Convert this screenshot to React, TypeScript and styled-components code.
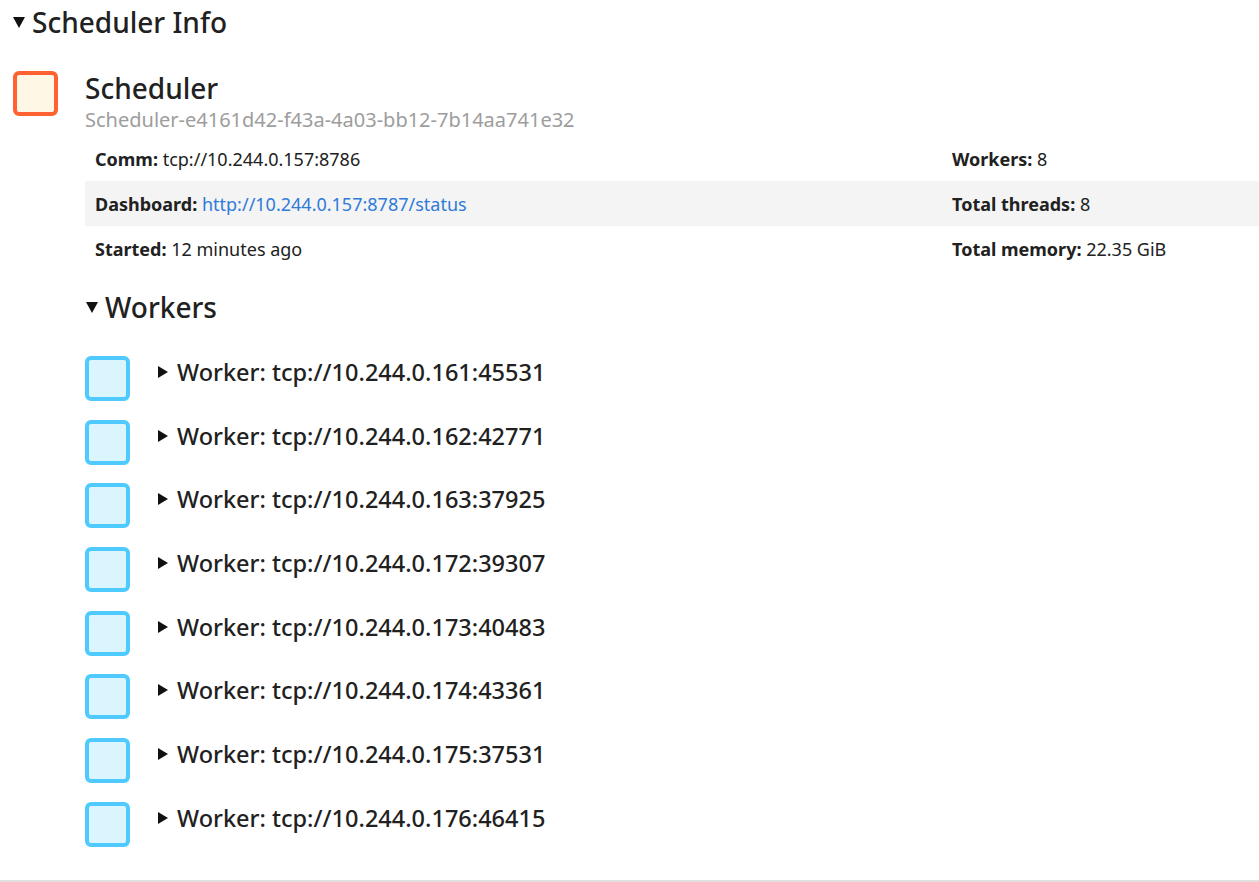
import React from "react";
import styled, { createGlobalStyle } from "styled-components";

const workers = [
  "tcp://10.244.0.161:45531",
  "tcp://10.244.0.162:42771",
  "tcp://10.244.0.163:37925",
  "tcp://10.244.0.172:39307",
  "tcp://10.244.0.173:40483",
  "tcp://10.244.0.174:43361",
  "tcp://10.244.0.175:37531",
  "tcp://10.244.0.176:46415",
];

export default function App() {
  return (
    <Page>
      <GlobalStyle />
      <SectionTitle>
        <Caret $open $size={13} />
        Scheduler Info
      </SectionTitle>

      <SchedulerBlock>
        <Badge $kind="scheduler" />
        <SchedulerBody>
          <Name>Scheduler</Name>
          <Id>Scheduler-e4161d42-f43a-4a03-bb12-7b14aa741e32</Id>
          <InfoTable>
            <InfoRow>
              <Cell>
                <Label>Comm:</Label> tcp://10.244.0.157:8786
              </Cell>
              <Cell>
                <Label>Workers:</Label> 8
              </Cell>
            </InfoRow>
            <InfoRow $striped>
              <Cell>
                <Label>Dashboard:</Label>{" "}
                <Link href="#">http://10.244.0.157:8787/status</Link>
              </Cell>
              <Cell>
                <Label>Total threads:</Label> 8
              </Cell>
            </InfoRow>
            <InfoRow>
              <Cell>
                <Label>Started:</Label> 12 minutes ago
              </Cell>
              <Cell>
                <Label>Total memory:</Label> 22.35 GiB
              </Cell>
            </InfoRow>
          </InfoTable>

          <WorkersTitle>
            <Caret $open $size={13} />
            Workers
          </WorkersTitle>

          <WorkerList>
            {workers.map((w) => (
              <WorkerRow key={w}>
                <Badge $kind="worker" />
                <WorkerLabel>
                  <Caret $size={12} />
                  Worker: {w}
                </WorkerLabel>
              </WorkerRow>
            ))}
          </WorkerList>
        </SchedulerBody>
      </SchedulerBlock>
      <BottomRule />
    </Page>
  );
}

// -------------------------- style --------------------------

const GlobalStyle = createGlobalStyle`
  body {
    margin: 0;
    background: #ffffff;
    color: #212121;
    font-family: "Noto Sans", "Open Sans", sans-serif;
  }
`;

const Page = styled.div`
  display: flex;
  flex-direction: column;
  width: 1259px;
  height: 882px;
  overflow: hidden;
`;

// disclosure marker, pointing down when open and right when closed
const Caret = styled.span<{ $open?: boolean; $size: number }>`
  display: inline-block;
  flex: none;
  width: 0;
  height: 0;
  ${({ $open, $size }) =>
    $open
      ? `border-left: ${$size / 2}px solid transparent;
         border-right: ${$size / 2}px solid transparent;
         border-top: ${$size * 0.85}px solid #111;`
      : `border-top: ${$size / 2}px solid transparent;
         border-bottom: ${$size / 2}px solid transparent;
         border-left: ${$size * 0.85}px solid #111;`}
`;

const SectionTitle = styled.div`
  display: flex;
  align-items: center;
  gap: 7px;
  height: 44px;
  padding-left: 13px;
  font-size: 28px;
  font-weight: 500;
`;

const SchedulerBlock = styled.div`
  display: flex;
  gap: 27px;
  padding: 27px 0 0 13px;
`;

const Badge = styled.div<{ $kind: "scheduler" | "worker" }>`
  flex: none;
  box-sizing: border-box;
  width: 45px;
  height: 45px;
  border-radius: 6px;
  border: ${({ $kind }) => ($kind === "scheduler" ? "4px solid #ff6132" : "4px solid #4fcaff")};
  background: ${({ $kind }) => ($kind === "scheduler" ? "#fff7e5" : "#dbf5ff")};
`;

const SchedulerBody = styled.div`
  flex: 1;
  display: flex;
  flex-direction: column;
`;

const Name = styled.div`
  height: 34px;
  line-height: 34px;
  font-size: 28px;
  font-weight: 500;
`;

const Id = styled.div`
  height: 30px;
  line-height: 30px;
  font-size: 20px;
  color: #9d9d9d;
`;

const InfoTable = styled.div`
  display: flex;
  flex-direction: column;
  margin-top: 1px;
`;

const InfoRow = styled.div<{ $striped?: boolean }>`
  display: grid;
  grid-template-columns: 857px 1fr;
  height: 45px;
  align-items: center;
  background: ${({ $striped }) => ($striped ? "#f4f4f4" : "transparent")};
`;

const Cell = styled.div`
  padding-left: 10px;
  font-size: 18px;
  white-space: nowrap;
`;

const Label = styled.strong`
  font-weight: 700;
`;

const Link = styled.a`
  color: #2f7bd9;
  text-decoration: none;
`;

const WorkersTitle = styled.div`
  display: flex;
  align-items: center;
  gap: 7px;
  height: 40px;
  margin-top: 16px;
  padding-left: 1px;
  font-size: 28px;
  font-weight: 500;
`;

const WorkerList = styled.div`
  display: flex;
  flex-direction: column;
  gap: 18.7px;
  margin-top: 29px;
`;

const WorkerRow = styled.div`
  display: flex;
  align-items: center;
  gap: 28px;
`;

const WorkerLabel = styled.div`
  display: flex;
  align-items: center;
  gap: 9px;
  margin-top: -13px;
  font-size: 23.5px;
  font-weight: 500;
`;

const BottomRule = styled.div`
  margin-top: auto;
  height: 2px;
  background: #e0e0e0;
`;
